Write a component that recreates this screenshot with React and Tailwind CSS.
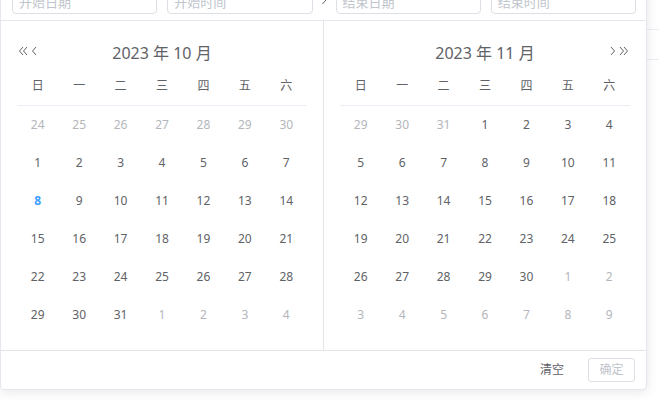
import React from 'react';

const WEEK = ['日', '一', '二', '三', '四', '五', '六'];

// build 42 cells for a month grid, starting on Sunday (always show some of the previous month)
const buildDays = (year, month) => {
  const first = new Date(year, month, 1);
  const offset = first.getDay() === 0 ? 7 : first.getDay();
  const cells = [];
  for (let i = 0; i < 42; i++) {
    const d = new Date(year, month, 1 - offset + i);
    cells.push({ day: d.getDate(), current: d.getMonth() === month });
  }
  return cells;
};

const DoubleLeft = () => (
  <svg width="10" height="10" viewBox="0 0 10 10" fill="none" stroke="#606266" strokeWidth="1">
    <path d="M5 1 L1.5 5 L5 9" />
    <path d="M9 1 L5.5 5 L9 9" />
  </svg>
);

const SingleLeft = () => (
  <svg width="7" height="10" viewBox="0 0 7 10" fill="none" stroke="#606266" strokeWidth="1">
    <path d="M5 1 L1.5 5 L5 9" />
  </svg>
);

const DoubleRight = () => (
  <svg width="10" height="10" viewBox="0 0 10 10" fill="none" stroke="#606266" strokeWidth="1">
    <path d="M1 1 L4.5 5 L1 9" />
    <path d="M5 1 L8.5 5 L5 9" />
  </svg>
);

const SingleRight = () => (
  <svg width="7" height="10" viewBox="0 0 7 10" fill="none" stroke="#606266" strokeWidth="1">
    <path d="M2 1 L5.5 5 L2 9" />
  </svg>
);

const Input = ({ placeholder }) => (
  <div className="flex-1 px-[5px]">
    <div className="h-[32px] rounded-[4px] border border-[#dcdfe6] bg-white flex items-center pt-[9px] px-[6px] text-[13px] text-[#c0c4cc]">
      {placeholder}
    </div>
  </div>
);

const MonthPanel = ({ year, month, side }) => {
  const days = buildDays(year, month);
  const rows = [0, 1, 2, 3, 4, 5].map(r => days.slice(r * 7, r * 7 + 7));
  return (
    <div className={`flex-1 p-4 ${side === 'left' ? 'border-r border-[#e4e4e4]' : ''}`}>
      <div className="h-[28px] grid grid-cols-[1fr_auto_1fr] items-center">
        <div className="flex items-center gap-[3px] pl-[1px]">
          {side === 'left' && (
            <>
              <DoubleLeft />
              <SingleLeft />
            </>
          )}
        </div>
        <div className="text-[16px] text-[#606266] pt-[3px]">
          {year} 年 {month + 1} 月
        </div>
        <div className="flex items-center justify-end gap-[3px] pr-[1px]">
          {side === 'right' && (
            <>
              <SingleRight />
              <DoubleRight />
            </>
          )}
        </div>
      </div>
      <div className="grid grid-cols-7 h-[41px] items-center pt-[2px] border-b border-[#ebeef5] text-[12px] text-[#606266]">
        {WEEK.map(w => (
          <div key={w} className="text-center">{w}</div>
        ))}
      </div>
      {rows.map((row, i) => (
        <div key={i} className="grid grid-cols-7 h-[38px] items-center text-[12px]">
          {row.map((c, j) => {
            const today = side === 'left' && c.current && c.day === 8;
            return (
              <div
                key={j}
                className={`text-center ${
                  today ? 'text-[#409eff] font-bold' : c.current ? 'text-[#606266]' : 'text-[#b4b6bb]'
                }`}
              >
                {c.day}
              </div>
            );
          })}
        </div>
      ))}
    </div>
  );
};

export default function App() {
  return (
    <div
      className="w-[659px] h-[406px] overflow-hidden bg-white flex items-start"
      style={{ fontFamily: '"Noto Sans", "Noto Sans CJK SC", sans-serif' }}
    >
      <div className="w-[647px] shrink-0 -mt-[27px] bg-white border border-[#e4e7ed] rounded-[4px] shadow-[0_2px_12px_0_rgba(0,0,0,0.1)] relative z-10">
        <div className="flex items-center pt-[8px] pb-[6px] pl-[6px] pr-[5px] border-b border-[#e4e7ed]">
          <div className="flex flex-1">
            <Input placeholder="开始日期" />
            <Input placeholder="开始时间" />
          </div>
          <div className="w-[13px] flex justify-center pt-[3px]">
            <svg width="6" height="10" viewBox="0 0 6 10" fill="none" stroke="#606266" strokeWidth="1">
              <path d="M1.5 1 L5 5 L1.5 9" />
            </svg>
          </div>
          <div className="flex flex-1">
            <Input placeholder="结束日期" />
            <Input placeholder="结束时间" />
          </div>
        </div>
        <div className="flex">
          <MonthPanel year={2023} month={9} side="left" />
          <MonthPanel year={2023} month={10} side="right" />
        </div>
        <div className="h-[39px] border-t border-[#e4e4e4] flex items-center justify-end pr-[11px]">
          <button className="text-[12px] text-[#606266] px-[15px] h-[24px]">清空</button>
          <button className="ml-[9px] h-[24px] w-[47px] rounded-[3px] border border-[#dcdfe6] text-[12px] text-[#c0c4cc] bg-white">
            确定
          </button>
        </div>
      </div>
      <div className="flex-1 flex flex-col">
        <div className="h-[30px] border-b border-[#ebeef5]" />
        <div className="h-[30px] border-b border-[#ebeef5]" />
      </div>
    </div>
  );
}
